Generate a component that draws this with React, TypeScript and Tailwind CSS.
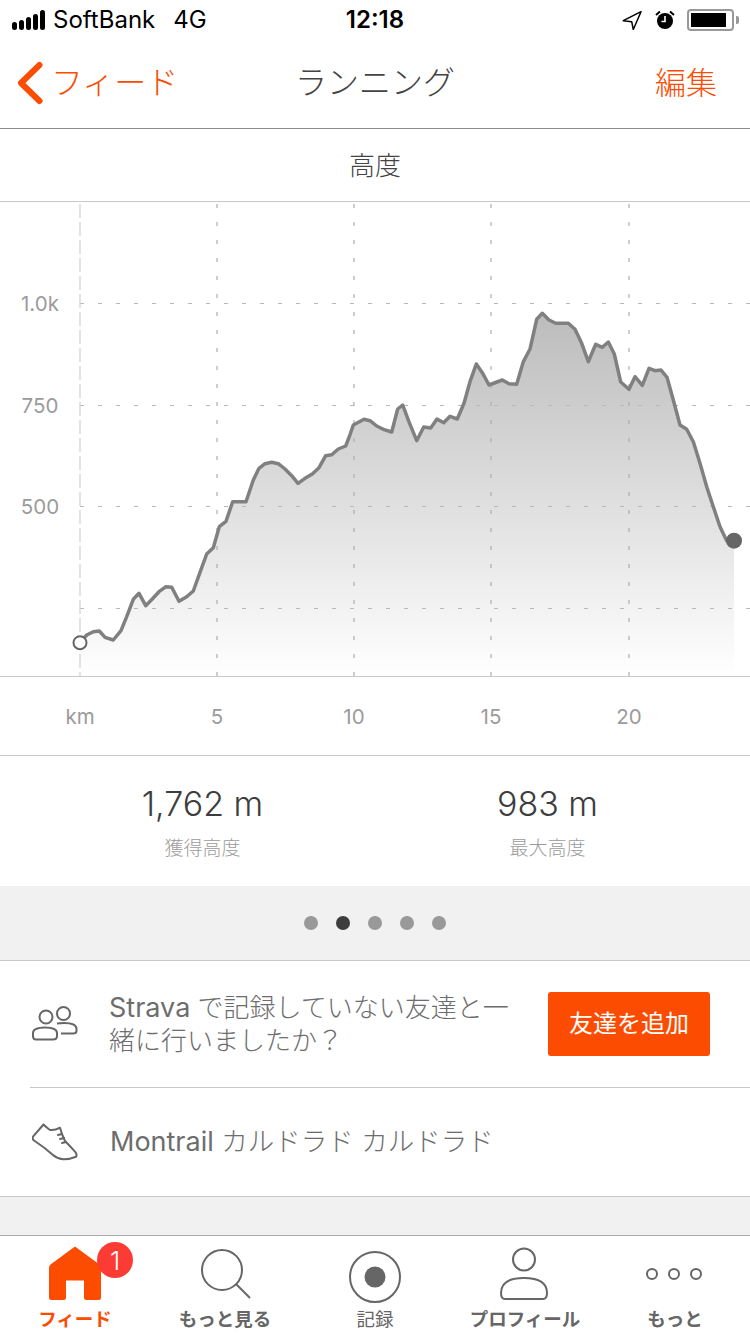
const JP = '"Inter","Noto Sans CJK JP",sans-serif';

const pts: [number, number][] = [
  [80,642.7],[86.7,635],[93.3,631.7],[99.3,631],[105,637.3],[113.3,640],[121,630.7],[126.7,616.7],[133.3,599.3],[139,593.3],[145.7,605.7],[152.3,599],[159,591.7],[166,586.7],[171.7,587.3],[179,601.3],[186.7,596.7],[193.3,591],[200,572.3],[206.7,554],[213.3,547.7],[219.3,526.7],[226,521.3],[232.7,501.7],[246,501.7],[253.3,480],[259,468.3],[265,463.7],[271.7,462.3],[278.3,463.7],[285,469],[291.7,475.7],[298,483.3],[305,478.3],[312.3,474],[319,467.7],[325.7,455.7],[331.7,454.7],[338.3,449],[345.7,446],[349.3,436.7],[353.3,425],[364,419.3],[370,420.7],[376.7,426],[383.3,429.3],[391.7,432],[397.7,409],[402.7,405],[409.3,422.7],[416.7,440.7],[423.7,427],[430.7,428],[437,419],[443.7,422.7],[450,416.3],[457.3,419],[464,403.3],[470,381.7],[476.3,364],[482.3,372.7],[489,385],[502.3,380],[509,383.7],[516.7,384.3],[523.3,361.7],[530,349],[536.7,319.3],[542.3,313.3],[549,320],[555.7,323.3],[568.3,323.3],[575,329.3],[581.7,343.3],[588.3,361.7],[595.7,344.3],[602.3,347.3],[608.3,342],[614.3,354],[620.7,382],[629,389.3],[635,376.7],[642.3,385.3],[649,368.3],[655,370.7],[661,370],[667,377.3],[673.3,400],[680,425],[686.7,429.3],[693.3,441.7],[700,463.3],[706.7,486.7],[713.3,506.7],[720,526.7],[726.7,540.7],[734,540.7],
];
const line = pts.map((p) => `${p[0]},${p[1] - 202}`).join(' ');
const area = `80,474 ${line} 734,474`;

function Chart() {
  const hs = [101.5, 203.5, 304.5, 406.5];
  const vs = [80, 217, 354, 491, 629];
  return (
    <svg width="750" height="553" viewBox="0 0 750 553" className="block shrink-0">
      <defs>
        <linearGradient id="g" x1="0" y1="111" x2="0" y2="474" gradientUnits="userSpaceOnUse">
          <stop offset="0" stopColor="#bcbcbc" />
          <stop offset="1" stopColor="#ffffff" />
        </linearGradient>
      </defs>
      <polygon points={area} fill="url(#g)" />
      {hs.map((y) => (
        <line key={y} x1="80" x2="750" y1={y} y2={y} stroke="#b8b8b8" strokeWidth="1" strokeDasharray="4 14" />
      ))}
      {vs.map((x) => (
        <line key={x} x1={x} x2={x} y1="0" y2="474" stroke={x === 80 ? '#d0d0d0' : '#adadad'} strokeWidth="1.2" strokeDasharray={x === 80 ? '14 4' : '4 14'} strokeDashoffset="-2" />
      ))}
      <line x1="0" x2="750" y1="474.5" y2="474.5" stroke="#c8c8c8" strokeWidth="1" />
      <polyline points={line} fill="none" stroke="#808080" strokeWidth="3.5" strokeLinejoin="round" />
      <circle cx="80" cy="440.7" r="6.5" fill="#fff" stroke="#666" strokeWidth="2" />
      <circle cx="734" cy="338.7" r="8" fill="#666" />
      <g fill="#9b9b9b" fontSize="20.5" fontFamily={JP}>
        <text x="40" y="109" textAnchor="middle">1.0k</text>
        <text x="40" y="211" textAnchor="middle">750</text>
        <text x="40" y="312" textAnchor="middle">500</text>
        <text x="80" y="522" textAnchor="middle">km</text>
        <text x="217" y="522" textAnchor="middle">5</text>
        <text x="354" y="522" textAnchor="middle">10</text>
        <text x="491" y="522" textAnchor="middle">15</text>
        <text x="629" y="522" textAnchor="middle">20</text>
      </g>
    </svg>
  );
}

function StatusBar() {
  return (
    <div className="h-[40px] flex items-center justify-between pl-[12px] pr-[11px] text-black relative shrink-0">
      <div className="flex items-center">
        <svg width="34" height="20" viewBox="0 0 34 20">
          <rect x="0" y="12" width="5" height="8" rx="2.5" fill="#000" />
          <rect x="7" y="10" width="5" height="10" rx="2.5" fill="#000" />
          <rect x="14" y="7" width="5" height="13" rx="2.5" fill="#000" />
          <rect x="21" y="4" width="5" height="16" rx="2.5" fill="#000" />
          <rect x="28" y="0" width="5" height="20" rx="2.5" fill="#000" />
        </svg>
        <span className="text-[24px] ml-[7px]">SoftBank</span>
        <span className="text-[24px] ml-[18px]">4G</span>
      </div>
      <span className="absolute left-0 right-0 text-center text-[24px] font-semibold">12:18</span>
      <div className="flex items-center">
        <svg width="20" height="20" viewBox="0 0 20 20" className="mr-[13px]">
          <path d="M1.3 10.7 19 1.7 11.3 19.5 9.7 11.7Z" fill="none" stroke="#000" strokeWidth="1.5" strokeLinejoin="round" />
        </svg>
        <svg width="20" height="20" viewBox="0 0 20 20" className="mr-[12px]">
          <circle cx="10" cy="11" r="8" fill="#000" />
          <path d="M10 6v5.5H6.5" fill="none" stroke="#fff" strokeWidth="1.6" />
          <path d="M1 5 5 1.5M19 5 15 1.5" stroke="#000" strokeWidth="2" />
        </svg>
        <div className="w-[47px] h-[22px] border-2 border-[#999] rounded-[4px] p-[2px]">
          <div className="w-[35px] h-full bg-black" />
        </div>
        <div className="w-[3px] h-[8px] bg-[#999] rounded-r-[2px] ml-[2px]" />
      </div>
    </div>
  );
}

function NavBar() {
  return (
    <div className="h-[89px] border-b border-[#8c8c8c] flex items-center justify-between relative shrink-0 pb-[3px]">
      <div className="flex items-center pl-[16px] text-[#fc4c02]">
        <svg width="28" height="44" viewBox="0 0 28 44">
          <path d="M23.5 4 5 22 23.5 40" fill="none" stroke="#fc4c02" strokeWidth="6" strokeLinecap="round" strokeLinejoin="round" />
        </svg>
        <span className="text-[32px] ml-[7px] font-light leading-none">フィード</span>
      </div>
      <span className="absolute left-0 right-0 text-center text-[32px] text-[#444] font-light leading-none pointer-events-none">ランニング</span>
      <span className="text-[31px] text-[#fc4c02] pr-[33px] font-light leading-none">編集</span>
    </div>
  );
}

function Stat({ v, l }: { v: string; l: string }) {
  return (
    <div className="flex flex-col items-center w-[345px]">
      <span className="text-[34px] text-[#3d3d3d] leading-[40px] font-light">{v}</span>
      <span className="text-[19px] text-[#9b9b9b] leading-[24px] mt-[13px] font-light">{l}</span>
    </div>
  );
}

function Feed() {
  return (
    <svg width="52" height="54" viewBox="0 0 52 54" className="block">
      <path d="M26 0.5 50.5 18.5 Q52 19.8 52 22 V51.5 Q52 54 49.5 54 H37.5 Q35 54 35 51.5 V34.5 H17 V51.5 Q17 54 14.5 54 H2.5 Q0 54 0 51.5 V22 Q0 19.8 1.5 18.5Z" fill="#fc4c02" />
    </svg>
  );
}

function Tab({ label, color, bold, children }: { label: string; color: string; bold?: boolean; children: React.ReactNode }) {
  return (
    <div className="flex-1 flex flex-col items-center relative">
      <div className="h-[70px] pt-[6px] flex items-center justify-center">{children}</div>
      <span className={`text-[18.5px] leading-[24px] mt-[1px] ${bold ? 'font-bold' : ''}`} style={{ color }}>{label}</span>
    </div>
  );
}

export default function App() {
  return (
    <div className="w-[750px] h-[1334px] bg-white flex flex-col overflow-hidden" style={{ fontFamily: JP }}>
      <StatusBar />
      <NavBar />
      <div className="h-[73px] border-b border-[#c8c8c8] flex items-center justify-center text-[26px] text-[#444] shrink-0 font-light">高度</div>
      <Chart />
      <div className="h-[131px] border-t border-[#c8c8c8] flex justify-center pt-[28px] shrink-0">
        <Stat v="1,762 m" l="獲得高度" />
        <Stat v="983 m" l="最大高度" />
      </div>
      <div className="h-[74px] bg-[#f1f1f1] flex items-center justify-center gap-[18px] shrink-0">
        {[0, 1, 2, 3, 4].map((i) => (
          <span key={i} className={`w-[14px] h-[14px] rounded-full ${i === 1 ? 'bg-[#3d3d3d]' : 'bg-[#999]'}`} />
        ))}
      </div>
      <div className="border-t border-b border-[#c8c8c8] bg-white shrink-0">
        <div className="ml-[30px] h-[127px] border-b border-[#c8c8c8] flex items-center">
          <svg width="46" height="36" viewBox="0 0 46 36" className="ml-[2px] shrink-0">
            <g fill="none" stroke="#666" strokeWidth="2">
              <circle cx="14" cy="11" r="6.5" /><circle cx="31.5" cy="7.5" r="6.5" />
              <path d="M4 33.5 H21 Q25 33.5 25 30 V27 Q25 21.5 13 21.5 Q1 21.5 1 27 V30 Q1 33.5 4 33.5Z" />
              <path d="M25 17.5 Q28 17 32 17 Q44.5 17 44.5 23 V25 Q44.5 27.5 41 27.5 H29" />
            </g>
          </svg>
          <div className="w-[415px] ml-[31px] text-[26px] leading-[33px] text-[#6d6d6d] shrink-0 font-light whitespace-nowrap">
            <div><span className="text-[27px] font-normal">Strava</span> で記録していない友達と一</div>
            <div>緒に行いましたか？</div>
          </div>
          <div className="ml-[24px] w-[162px] h-[64px] rounded-[3px] bg-[#fc4c02] text-white text-[24px] flex items-center justify-center shrink-0">友達を追加</div>
        </div>
        <div className="ml-[30px] h-[108px] flex items-center">
          <svg width="48" height="38" viewBox="0 0 48 38" className="ml-[2px] shrink-0">
            <g fill="none" stroke="#666" strokeWidth="2" strokeLinejoin="round" strokeLinecap="round">
              <path d="M11.5 1.5 Q15 5 18 7 Q23 7.5 28 4.7 Q30 12 33 18 Q38 23 43 28.7 Q45.5 31.5 44 33.7 Q37 36.5 31 36.3 Q25 35.5 21 32 Q12 24 2 17.5 Q0 15.5 1 13.7Z" />
              <path d="M26 12 30 11M28 16 32 15M30 20 34 19" />
            </g>
          </svg>
          <span className="ml-[30px] text-[26.5px] text-[#6d6d6d] font-light"><span className="text-[27px] font-normal">Montrail</span> カルドラド カルドラド</span>
        </div>
      </div>
      <div className="flex-1 bg-[#f1f1f1]" />
      <div className="h-[99px] border-t border-[#aaa] flex shrink-0 px-0">
        <Tab label="フィード" color="#fc4c02" bold>
          <div className="relative -mt-[2px]">
            <Feed />
            <span className="absolute -top-[4px] left-[48px] w-[36px] h-[36px] rounded-full bg-[#fc3b35] text-white text-[26px] font-light flex items-center justify-center">1</span>
          </div>
        </Tab>
        <Tab label="もっと見る" color="#666" bold>
          <svg width="50" height="50" viewBox="0 0 50 50" className="ml-[2px]"><circle cx="21" cy="21" r="20" fill="none" stroke="#666" strokeWidth="2" /><path d="M35 35 49 49" stroke="#666" strokeWidth="2" /></svg>
        </Tab>
        <Tab label="記録" color="#666">
          <svg width="54" height="54" viewBox="0 0 54 54" className="mt-[6px]"><circle cx="27" cy="27" r="25" fill="none" stroke="#666" strokeWidth="2" /><circle cx="27" cy="27" r="10.5" fill="#666" /></svg>
        </Tab>
        <Tab label="プロフィール" color="#666" bold>
          <svg width="48" height="54" viewBox="0 0 48 54" className="-ml-[2px]"><g fill="none" stroke="#666" strokeWidth="2"><circle cx="24" cy="12.5" r="11" /><path d="M5 52 H43 Q47 52 47 46 Q47 31 24 31 Q1 31 1 46 Q1 52 5 52Z" /></g></svg>
        </Tab>
        <Tab label="もっと" color="#666" bold>
          <svg width="56" height="14" viewBox="0 0 56 14" className="-ml-[2px]"><g fill="none" stroke="#666" strokeWidth="2"><circle cx="6" cy="7" r="5" /><circle cx="28" cy="7" r="5" /><circle cx="50" cy="7" r="5" /></g></svg>
        </Tab>
      </div>
    </div>
  );
}
